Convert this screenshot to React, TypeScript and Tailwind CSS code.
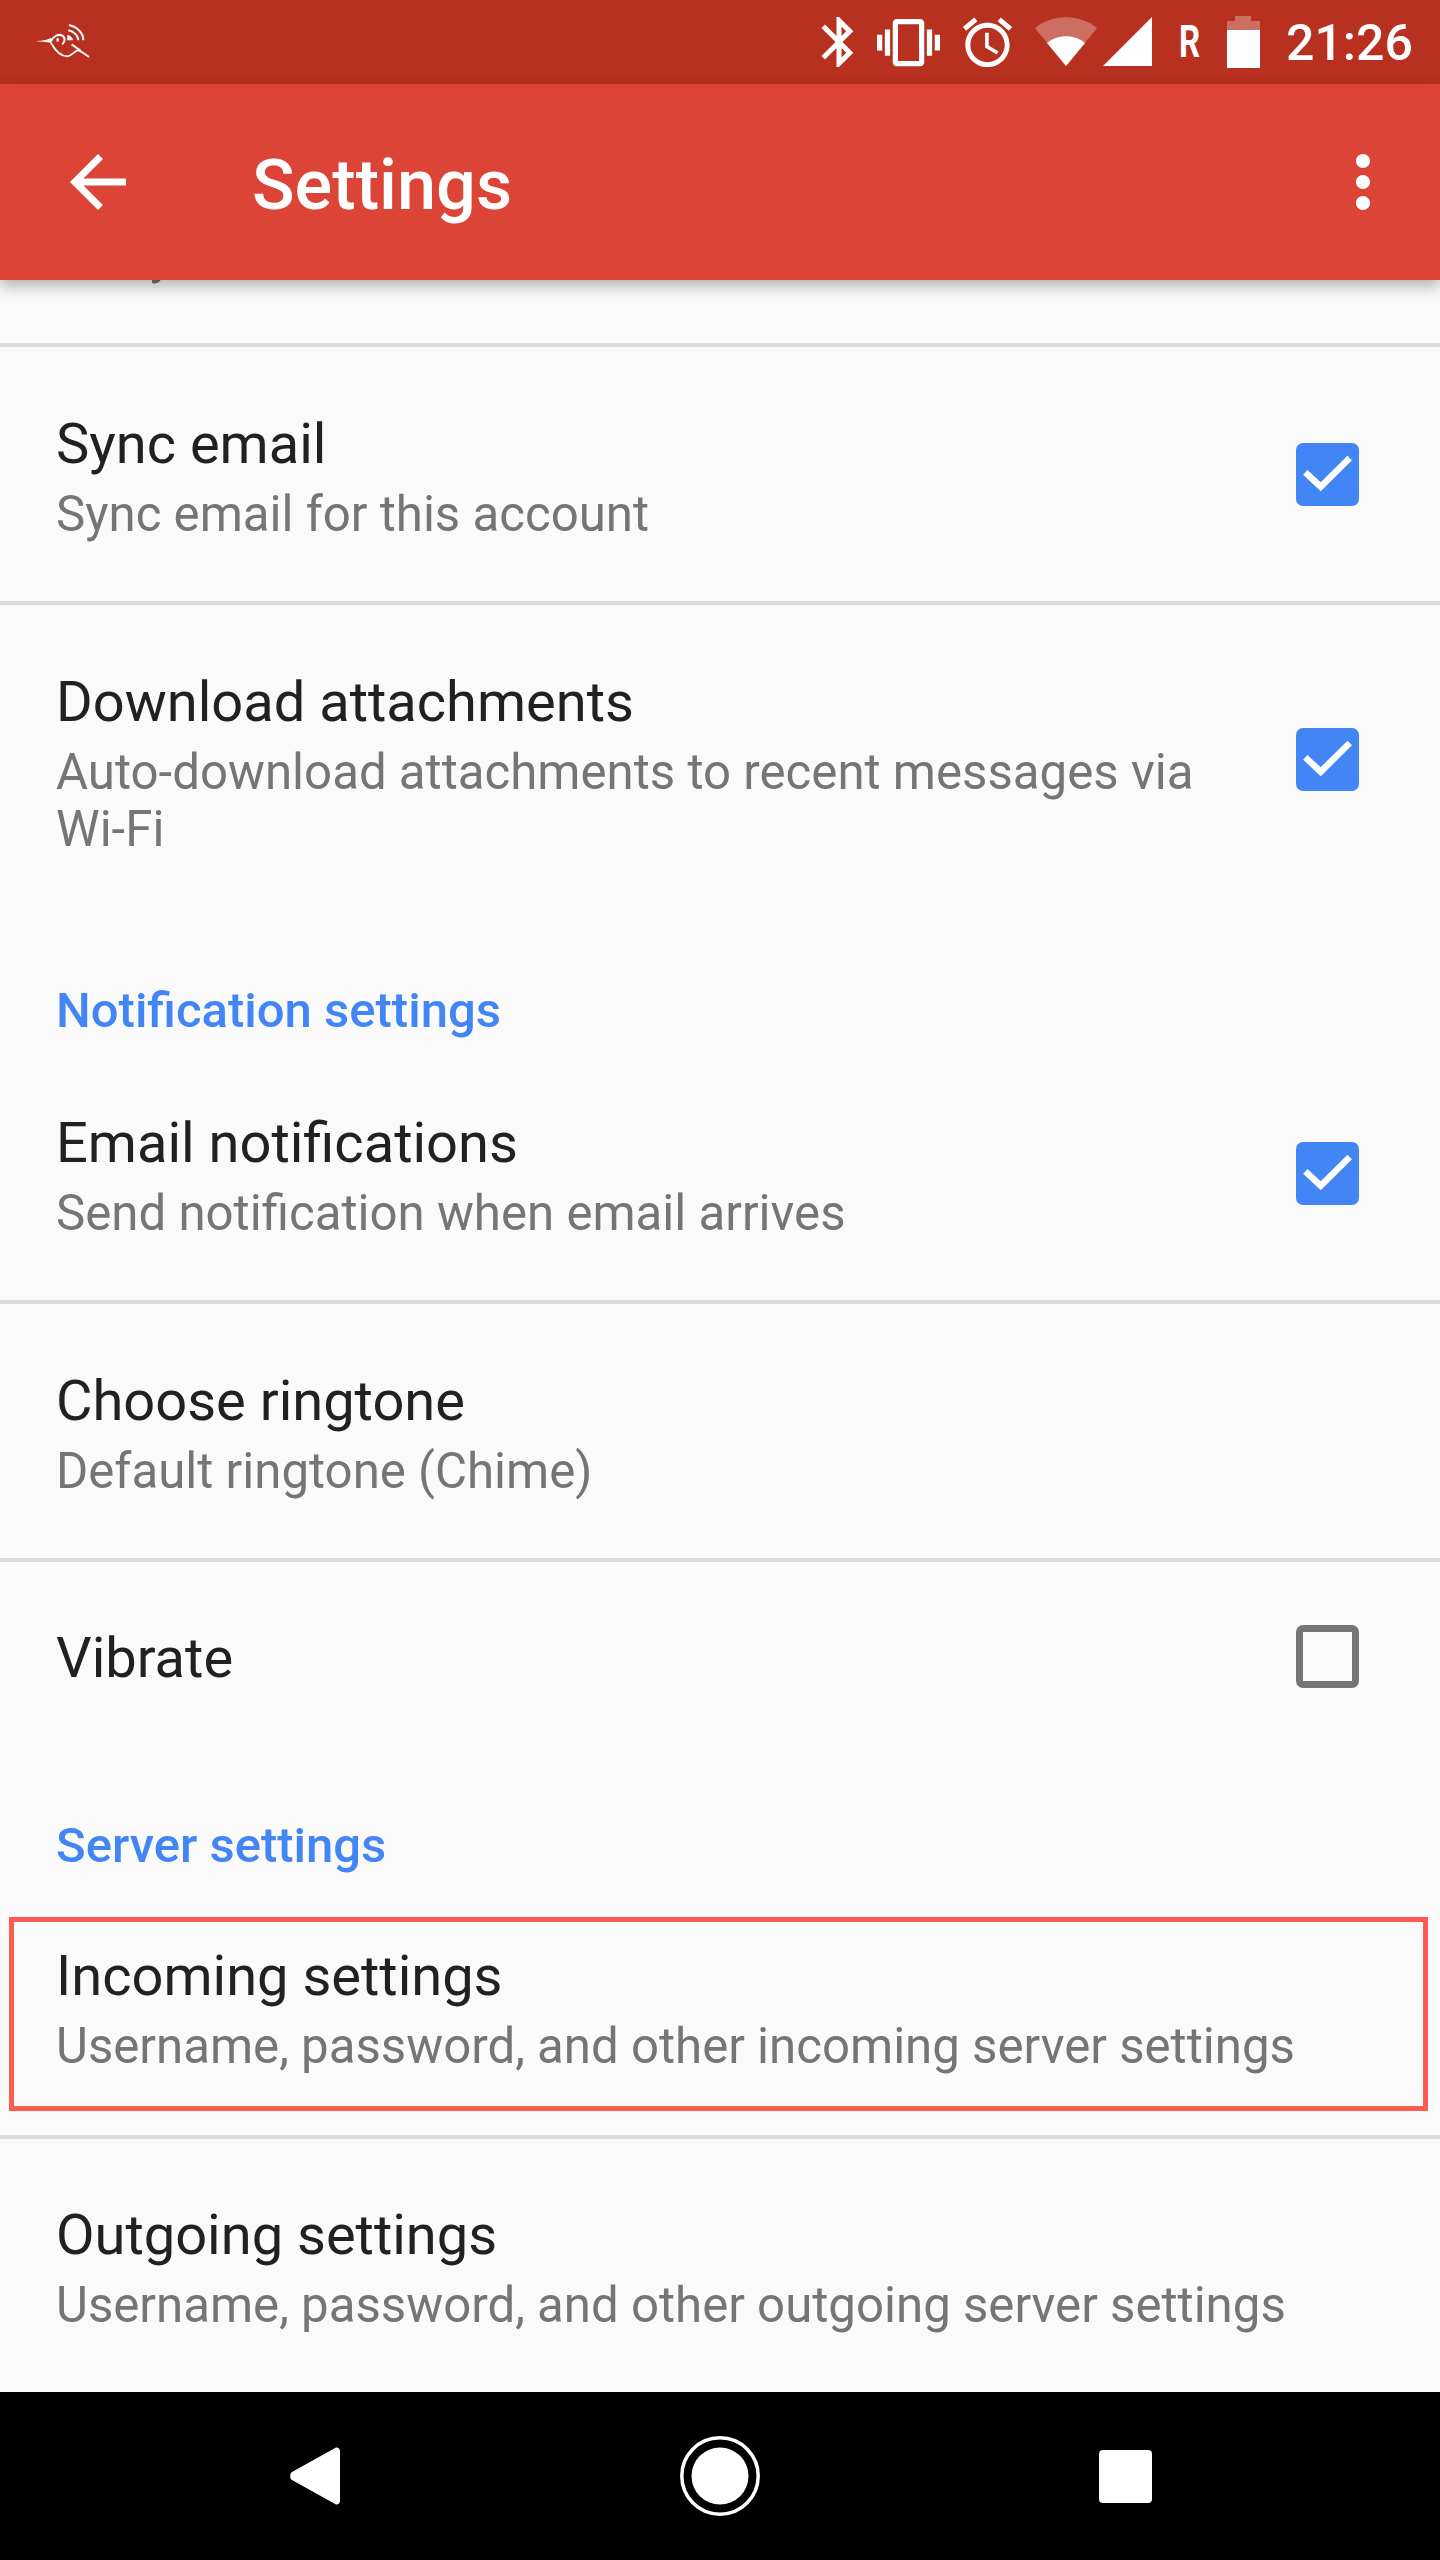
const ROBOTO = "font-['Roboto',sans-serif]";

function Check() {
  return (
    <div className="w-[63px] h-[63px] rounded-[7px] bg-[#4285f4] shrink-0">
      <svg width="63" height="63" viewBox="0 0 63 63">
        <path d="M9.3 29.3 L24.7 43.7 L53.7 15" fill="none" stroke="#fff" strokeWidth="6.4" />
      </svg>
    </div>
  );
}

function Uncheck() {
  return <div className="w-[63px] h-[63px] rounded-[7px] border-[7px] border-[#757575] shrink-0" />;
}

function Row(props: { title?: string; sub?: string[]; control?: React.ReactNode; h: string; border?: boolean; outline?: boolean; cut?: string; text?: string }) {
  return (
    <div className={`relative flex items-center pl-[56px] pr-[81px] ${props.h} ${props.border ? "border-b-4 border-[#dcdcdc]" : ""} ${props.cut ?? ""}`}>
      <div className={`flex-1 min-w-0 ${props.text ?? ""}`}>
        <div className="h-[70px] text-[56px] leading-[70px] text-[#212121]">{props.title}</div>
        <div className="mt-[7px] empty:hidden">
          {props.sub?.map((s) => (
            <div key={s} className="text-[49.2px] leading-[57px] text-[#757575] whitespace-nowrap">{s}</div>
          ))}
        </div>
      </div>
      {props.control}
      {props.outline && (
        <div className="absolute top-[36px] left-[9px] right-[12px] h-[194px] border-[5px] border-[#fc5c50]" />
      )}
    </div>
  );
}

function Section({ children, mt }: { children: string; mt: string }) {
  return <div className={`${mt} h-[70px] pl-[56px] text-[49px] leading-[70px] font-medium text-[#4285f4]`}>{children}</div>;
}

export default function App() {
  return (
    <div className={`w-[1440px] h-[2560px] flex flex-col overflow-hidden bg-[#fafafa] ${ROBOTO}`}>
      <div className="relative z-20 h-[84px] shrink-0 bg-[#b83020] flex items-center text-white">
        <svg className="ml-[25px]" width="80" height="55" viewBox="0 0 240 165" fill="none" stroke="#fff">
          <path d="M30 78 C50 78 62 76 78 69 L78 83 C62 81 50 80 30 78 Z" fill="#fff" stroke="none" />
          <path d="M76 82 C82 65 100 55 112 62 C122 68 120 80 112 88" strokeWidth="6" />
          <path d="M78 84 C90 105 105 125 128 124 C142 122 148 108 158 106 C170 110 182 118 192 126" strokeWidth="5" />
          <path d="M140 88 L168 108" strokeWidth="6" />
          <ellipse cx="98" cy="75" rx="4" ry="6" fill="#fff" stroke="none" />
          <path d="M127 60 L127 76 L144 76 C144 70 138 62 127 60 Z" fill="#fff" stroke="none" />
          <path d="M130 46 C148 50 160 62 160 76" strokeWidth="6" />
          <path d="M132 30 C158 36 175 55 175 76" strokeWidth="6" />
        </svg>

        <svg className="ml-[704px]" width="60" height="60" viewBox="0 0 24 24" fill="#fff">
          <path d="M17.71 7.71L12 2h-1v7.59L6.41 5 5 6.41 10.59 12 5 17.59 6.41 19 11 14.41V22h1l5.71-5.71-4.3-4.29 4.3-4.29zM13 5.83l1.88 1.88L13 9.59V5.83zm1.88 10.46L13 18.17v-3.76l1.88 1.88z" />
        </svg>
        <svg className="ml-[8px]" width="63" height="63" viewBox="0 0 24 24" fill="#fff">
          <path d="M0 15h2V9H0v6zm3 2h2V7H3v10zm19-8v6h2V9h-2zm-3 8h2V7h-2v10zM16.5 3h-9C6.67 3 6 3.67 6 4.5v15c0 .83.67 1.5 1.5 1.5h9c.83 0 1.5-.67 1.5-1.5v-15c0-.83-.67-1.5-1.5-1.5zM16 19H8V5h8v14z" />
        </svg>
        <svg className="ml-[18px]" width="59" height="59" viewBox="0 0 24 24" fill="#fff">
          <path d="M22 5.72l-4.6-3.86-1.29 1.53 4.6 3.86L22 5.72zM7.88 3.39L6.6 1.86 2 5.71l1.29 1.53 4.59-3.85zM12.5 8H11v6l4.75 2.85.75-1.23-4-2.37V8zM12 4c-4.97 0-9 4.03-9 9s4.03 9 9 9 9-4.03 9-9-4.03-9-9-9zm0 16c-3.87 0-7-3.13-7-7s3.13-7 7-7 7 3.13 7 7-3.13 7-7 7z" />
        </svg>
        <svg className="ml-[18px]" width="62" height="50" viewBox="0 0 62 50">
          <path d="M0 11 C17 -3.5 45 -3.5 62 11 L31 49 Z" fill="#fff" fillOpacity="0.3" />
          <path d="M12 26 C22 17 40 17 50 26 L31 49 Z" fill="#fff" />
        </svg>
        <svg className="ml-[6px]" width="49" height="50" viewBox="0 0 49 50">
          <path d="M49 0 V49 H0 Z" fill="#fff" />
        </svg>
        <div className="ml-[27px] w-[24px] text-[44px] leading-[50px] font-bold scale-x-[0.75] origin-left">R</div>
        <svg className="ml-[24px]" width="33" height="52" viewBox="0 0 33 52">
          <path d="M8 0 H24 V5 H33 V14 H0 V5 H8 Z" fill="#fff" fillOpacity="0.3" />
          <rect x="0" y="14" width="33" height="38" fill="#fff" />
        </svg>
        <div className="ml-[26px] mt-[2px] text-[50px] leading-[60px] font-medium whitespace-nowrap">21:26</div>
      </div>

      <div className="relative z-20 h-[196px] shrink-0 bg-[#db4437] flex items-center text-white shadow-[0_6px_14px_rgba(0,0,0,0.3)]">
        <svg className="ml-[56px]" width="84" height="84" viewBox="0 0 24 24" fill="#fff">
          <path d="M20 11H7.83l5.59-5.59L12 4l-8 8 8 8 1.41-1.41L7.83 13H20v-2z" />
        </svg>
        <div className="ml-[112px] mt-[6px] text-[70.3px] leading-[84px] font-medium">Settings</div>
        <svg className="ml-auto mr-[35px]" width="84" height="84" viewBox="0 0 24 24" fill="#fff">
          <path d="M12 8c1.1 0 2-.9 2-2s-.9-2-2-2-2 .9-2 2 .9 2 2 2zm0 2c-1.1 0-2 .9-2 2s.9 2 2 2 2-.9 2-2-.9-2-2-2zm0 6c-1.1 0-2 .9-2 2s.9 2 2 2 2-.9 2-2-.9-2-2-2z" />
        </svg>
      </div>

      <div className="flex-1 min-h-0 overflow-hidden">
        <Row sub={["Every 15 minutes"]} h="h-[258px]" border cut="-mt-[191px]" text="pt-[3px]" />
        <Row title="Sync email" sub={["Sync email for this account"]} control={<Check />} h="h-[258px]" border text="pt-[3px]" />
        <Row title="Download attachments" sub={["Auto-download attachments to recent messages via", "Wi-Fi"]} control={<Check />} h="h-[308px]" text="pt-[7px]" />
        <Section mt="mt-[63px]">Notification settings</Section>
        <Row title="Email notifications" sub={["Send notification when email arrives"]} control={<Check />} h="h-[258px]" border text="pt-[3px]" />
        <Row title="Choose ringtone" sub={["Default ringtone (Chime)"]} h="h-[258px]" border text="pt-[3px]" />
        <Row title="Vibrate" control={<Uncheck />} h="h-[189px]" text="pt-[3px]" />
        <Section mt="mt-[60px]">Server settings</Section>
        <Row title="Incoming settings" sub={["Username, password, and other incoming server settings"]} h="h-[258px]" border outline />
        <Row title="Outgoing settings" sub={["Username, password, and other outgoing server settings"]} h="h-[258px]" text="pb-[3px]" />
      </div>

      <div className="h-[168px] shrink-0 bg-black flex items-center pl-[290px]">
        <svg width="50" height="58" viewBox="0 0 50 58">
          <path d="M46 0.5 C48 0 50 2 50 4 V54 C50 56 48 58 46 57.5 L2 33 C-0.5 31 -0.5 27 2 25 Z" fill="#fff" />
        </svg>
        <svg className="ml-[340px]" width="80" height="80" viewBox="0 0 80 80">
          <circle cx="40" cy="40" r="38.2" fill="none" stroke="#fff" strokeWidth="3.5" />
          <circle cx="40" cy="40" r="28.5" fill="#fff" />
        </svg>
        <div className="ml-[339px] w-[53px] h-[53px] rounded-[4px] bg-white" />
      </div>
    </div>
  );
}
